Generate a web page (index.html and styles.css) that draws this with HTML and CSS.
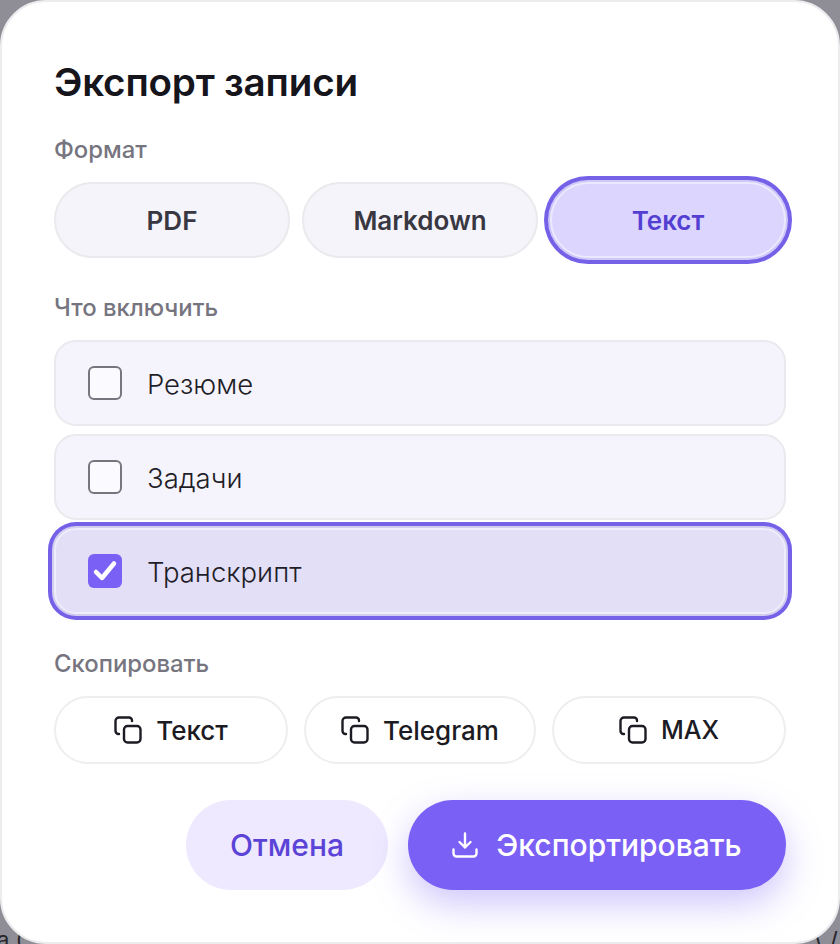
FILE: index.html
```html
<!DOCTYPE html>
<html lang="ru">
<head>
<meta charset="utf-8">
<title>Экспорт записи</title>
<link rel="stylesheet" href="styles.css">
</head>
<body>
<div class="backdrop" aria-hidden="true"><span class="bg-a">а (</span><span class="bg-b">\ /</span></div>
<main class="modal">
  <h1 class="title">Экспорт записи</h1>
  <div class="label label-format">Формат</div>
  <div class="formats">
    <button class="fmt">PDF</button>
    <button class="fmt">Markdown</button>
    <button class="fmt on">Текст</button>
  </div>
  <div class="label label-inc">Что включить</div>
  <div class="rows">
    <div class="row"><span class="box"></span><span class="row-text">Резюме</span></div>
    <div class="row"><span class="box"></span><span class="row-text">Задачи</span></div>
    <div class="row on"><span class="box checked"><svg viewBox="0 0 34 34" width="34" height="34"><path d="M8 18l6 6L26 9.500" fill="none" stroke="#fff" stroke-width="4.500" stroke-linecap="round" stroke-linejoin="round"/></svg></span><span class="row-text">Транскрипт</span></div>
  </div>
  <div class="label label-copy">Скопировать</div>
  <div class="copies">
    <button class="copy"><svg class="ci" viewBox="0 0 28 28"><rect x="10" y="10" width="16.500" height="16.500" rx="3.500"/><path d="M18 5V4.500A3 3 0 0 0 15 1.500H5A3.500 3.500 0 0 0 1.500 5V15a3 3 0 0 0 3 3H5"/></svg>Текст</button>
    <button class="copy"><svg class="ci" viewBox="0 0 28 28"><rect x="10" y="10" width="16.500" height="16.500" rx="3.500"/><path d="M18 5V4.500A3 3 0 0 0 15 1.500H5A3.500 3.500 0 0 0 1.500 5V15a3 3 0 0 0 3 3H5"/></svg>Telegram</button>
    <button class="copy"><svg class="ci" viewBox="0 0 28 28"><rect x="10" y="10" width="16.500" height="16.500" rx="3.500"/><path d="M18 5V4.500A3 3 0 0 0 15 1.500H5A3.500 3.500 0 0 0 1.500 5V15a3 3 0 0 0 3 3H5"/></svg><span class="max">MAX</span></button>
  </div>
  <div class="actions">
    <button class="cancel">Отмена</button>
    <button class="export"><svg class="ei" viewBox="0 0 26 26"><path d="M13 1.500V15.500M7.500 10l5.500 5.500L18.500 10M1.500 17.500V21.500a3 3 0 0 0 3 3h17a3 3 0 0 0 3-3V17.500"/></svg>Экспортировать</button>
  </div>
</main>
</body>
</html>
```
FILE: styles.css
```css
* { box-sizing: border-box; }
html, body { margin: 0; height: 944px; overflow: hidden; }
body {
  position: relative;
  background: #8f8e97;
  font-family: Inter, "Liberation Sans", sans-serif;
}
.backdrop { position: absolute; inset: 0; color: #26252c; font-size: 22px; }
.bg-a { position: absolute; left: -3px; top: 926px; }
.bg-b { position: absolute; right: 2px; top: 926px; font-size: 24px; }
.modal {
  position: relative;
  height: 944px;
  border: 2px solid #ececef;
  border-radius: 46px;
  background: #fff;
  padding: 52px 52px 0;
  display: flex;
  flex-direction: column;
}
.title {
  margin: 0;
  font-size: 38.600px;
  line-height: 56px;
  font-weight: 600;
  letter-spacing: -0.2px;
  color: #16151c;
}
.label {
  font-size: 23.900px;
  line-height: 28px;
  font-weight: 550;
  color: #76757f;
}
.label-format { margin-top: 26px; }
.label-inc { margin-top: 36px; }
.label-copy { margin-top: 36px; }
button { font-family: inherit; cursor: pointer; padding: 0; }
.formats {
  display: grid;
  grid-template-columns: repeat(3, 1fr);
  gap: 12px;
  margin-top: 18px;
}
.fmt {
  height: 76px;
  border: 2px solid #e9e9ee;
  border-radius: 38px;
  background: #f5f4fb;
  font-size: 26px;
  font-weight: 600;
  color: #383742;
}
.fmt.on {
  background: #dcd5fd;
  color: #5340d2;
  border-color: #ece8ff;
  box-shadow: 0 0 0 2px #cfc7f8, 0 0 0 6px #7561e8;
}
.rows { display: flex; flex-direction: column; gap: 8px; margin-top: 18px; }
.row {
  height: 86px;
  display: flex;
  align-items: center;
  gap: 26px;
  padding-left: 32px;
  border: 2px solid #e9e9ee;
  border-radius: 22px;
  background: #f5f4fc;
  font-size: 27.500px;
  font-weight: 350;
  color: #1f1e28;
}
.row-text { padding-top: 2px; margin-left: -1px; }
.row.on {
  background: #e3dff7;
  border-color: #efecfb;
  box-shadow: 0 0 0 2px #d3cdf0, 0 0 0 6px #7561e8;
}
.box {
  width: 34px;
  height: 34px;
  flex: none;
  border: 2px solid #77767f;
  border-radius: 6px;
  background: #fbfafe;
}
.box.checked { background: #7b60f5; border: 0; }
.box svg { display: block; }
.copies {
  display: grid;
  grid-template-columns: 234px 232px 234px;
  gap: 16px;
  margin-top: 18px;
}
.copy {
  height: 68px;
  display: flex;
  align-items: center;
  justify-content: center;
  gap: 14px;
  border: 2px solid #eeeef1;
  border-radius: 34px;
  background: #fff;
  font-size: 26px;
  font-weight: 450;
  color: #1c1b23;
}
.max { font-size: 25px; }
.ci { width: 28px; height: 28px; fill: none; stroke: #1c1b23; stroke-width: 2.400; stroke-linecap: round; stroke-linejoin: round; }
.actions {
  display: flex;
  justify-content: flex-end;
  gap: 20px;
  margin-top: 36px;
}
.cancel {
  width: 202px;
  height: 90px;
  border: 0;
  border-radius: 45px;
  background: #eee9fe;
  color: #5a43d6;
  font-size: 30px;
  font-weight: 500;
}
.export {
  width: 378px;
  height: 90px;
  border: 0;
  border-radius: 45px;
  background: #7b60f5;
  color: #fff;
  font-size: 30px;
  font-weight: 450;
  display: flex;
  align-items: center;
  justify-content: center;
  gap: 18px;
  box-shadow: 0 14px 36px rgba(123, 96, 245, 0.36);
}
.ei { width: 26px; height: 26px; fill: none; stroke: #fff; stroke-width: 2.400; stroke-linecap: round; stroke-linejoin: round; }
```
